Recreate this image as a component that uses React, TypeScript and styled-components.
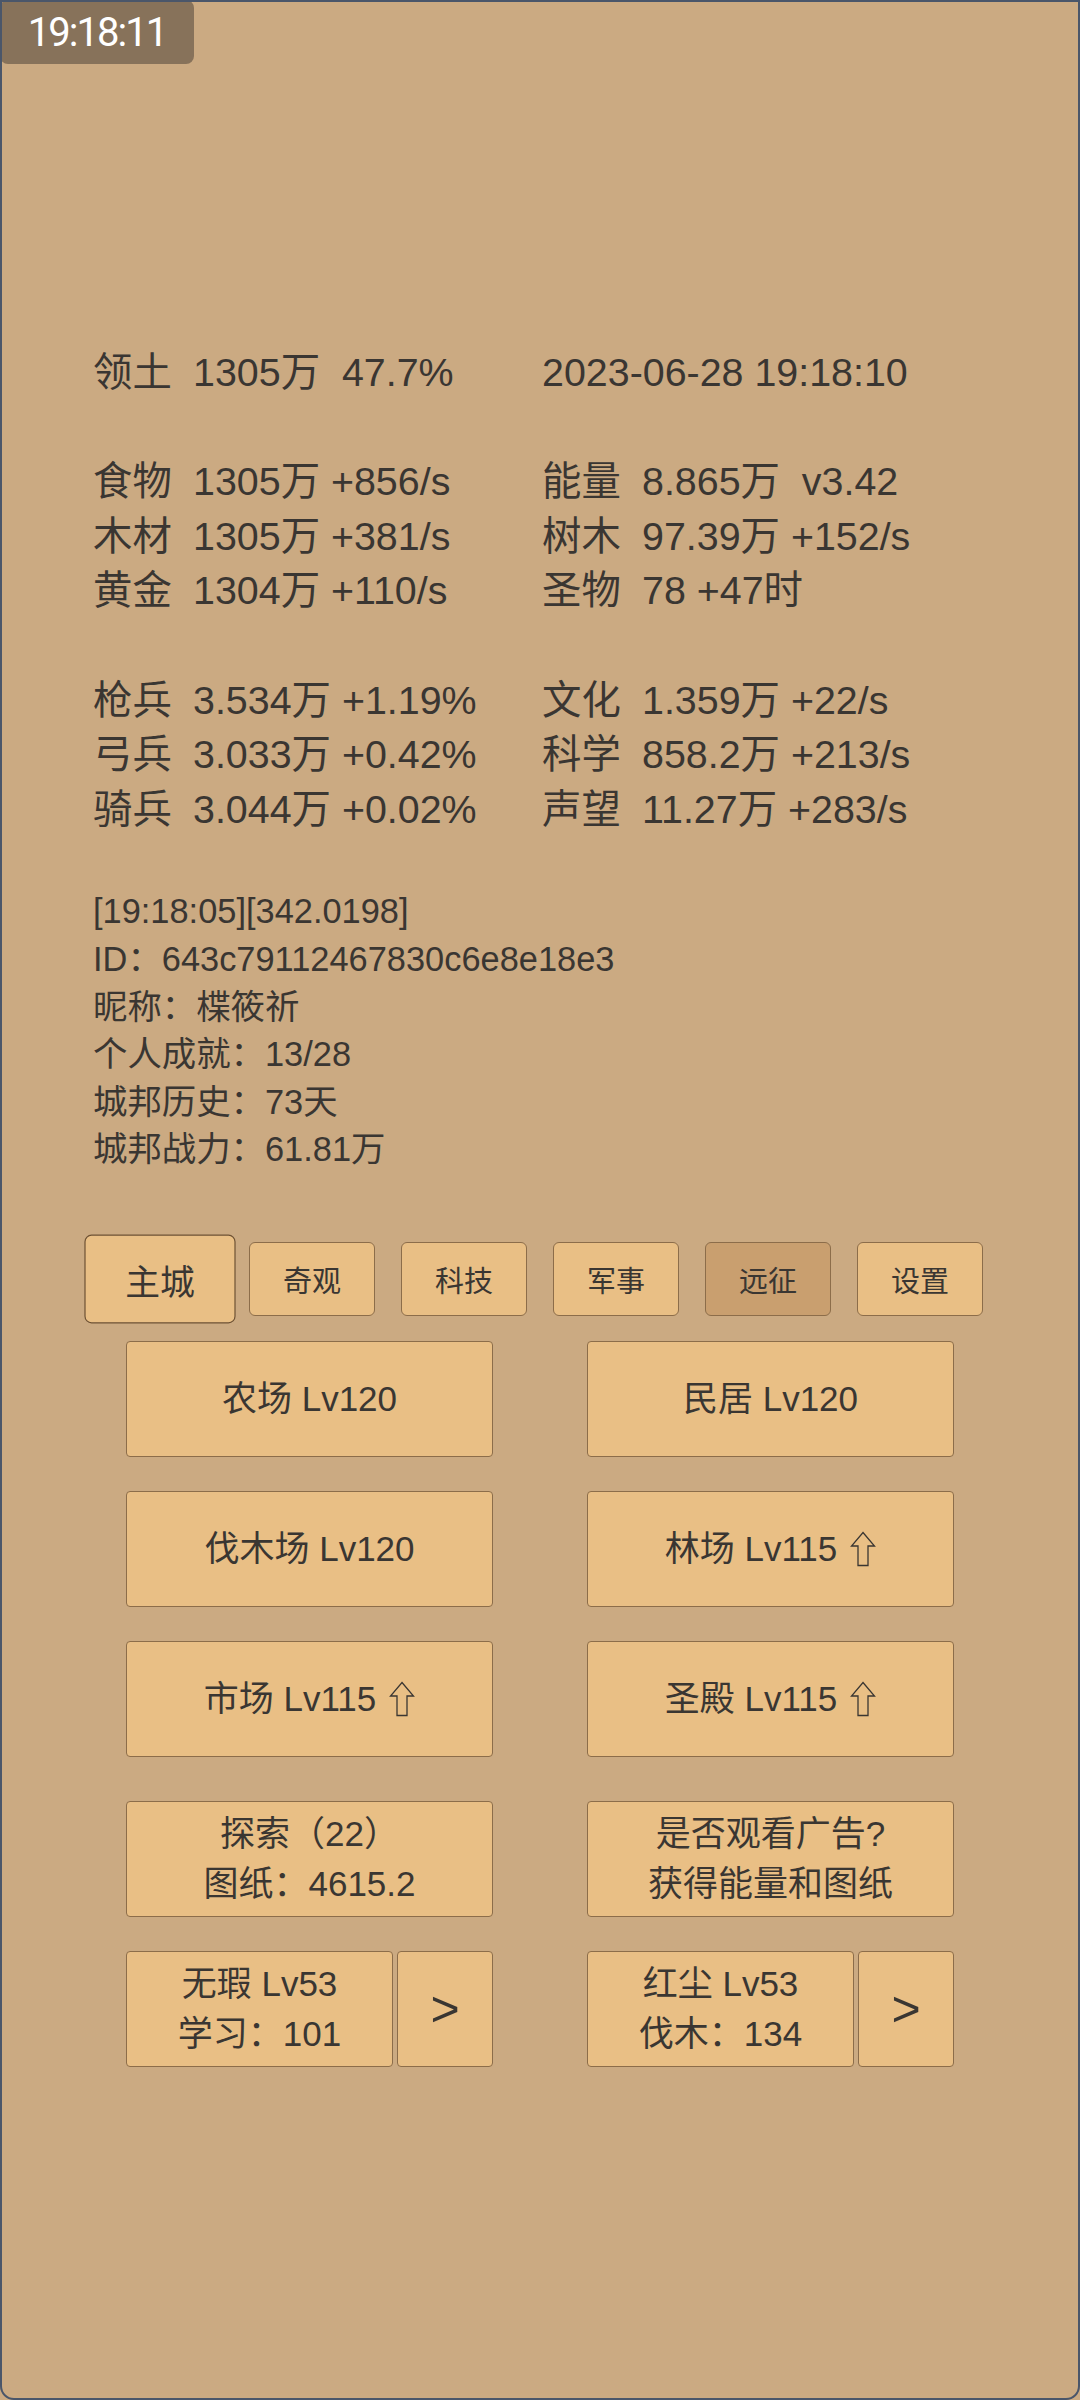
import React from "react";
import styled, { createGlobalStyle } from "styled-components";

const GlobalStyle = createGlobalStyle`
  body {
    margin: 0;
    background: #cbaa82;
    font-family: "Liberation Sans", "Noto Sans CJK SC", sans-serif;
  }
`;

interface Stat {
  label?: string;
  value: string;
}

// 资源统计，null 表示空行
const statRows: ([Stat, Stat] | null)[] = [
  [
    { label: "领土", value: "1305万  47.7%" },
    { value: "2023-06-28 19:18:10" },
  ],
  null,
  [
    { label: "食物", value: "1305万 +856/s" },
    { label: "能量", value: "8.865万  v3.42" },
  ],
  [
    { label: "木材", value: "1305万 +381/s" },
    { label: "树木", value: "97.39万 +152/s" },
  ],
  [
    { label: "黄金", value: "1304万 +110/s" },
    { label: "圣物", value: "78 +47时" },
  ],
  null,
  [
    { label: "枪兵", value: "3.534万 +1.19%" },
    { label: "文化", value: "1.359万 +22/s" },
  ],
  [
    { label: "弓兵", value: "3.033万 +0.42%" },
    { label: "科学", value: "858.2万 +213/s" },
  ],
  [
    { label: "骑兵", value: "3.044万 +0.02%" },
    { label: "声望", value: "11.27万 +283/s" },
  ],
];

const infoLines = [
  "[19:18:05][342.0198]",
  "ID：643c79112467830c6e8e18e3",
  "昵称：楪筱祈",
  "个人成就：13/28",
  "城邦历史：73天",
  "城邦战力：61.81万",
];

const tabs = ["主城", "奇观", "科技", "军事", "远征", "设置"];

const buildings = [
  { name: "农场 Lv120", up: false },
  { name: "民居 Lv120", up: false },
  { name: "伐木场 Lv120", up: false },
  { name: "林场 Lv115", up: true },
  { name: "市场 Lv115", up: true },
  { name: "圣殿 Lv115", up: true },
];

const heroes = [
  { name: "无瑕 Lv53", job: "学习：101" },
  { name: "红尘 Lv53", job: "伐木：134" },
];

// 可升级标记（空心上箭头）
const UpgradeIcon = () => (
  <UpIcon width="26" height="36" viewBox="0 0 26 36">
    <path
      d="M13 1.5 L24.5 15 L18 15 L18 34.5 L8 34.5 L8 15 L1.5 15 Z"
      fill="none"
      stroke="#3a3632"
      strokeWidth="1.3"
    />
  </UpIcon>
);

const App: React.FC = () => {
  return (
    <>
      <GlobalStyle />
      <Screen>
        <Clock>19:18:11</Clock>

        <StatBlock>
          {statRows.map((row, i) =>
            row ? (
              <StatRow key={i}>
                {row.map((s, j) => (
                  <StatCell key={j}>
                    {s.label && <StatLabel>{s.label}</StatLabel>}
                    <StatValue>{s.value}</StatValue>
                  </StatCell>
                ))}
              </StatRow>
            ) : (
              <BlankLine key={i} />
            )
          )}
        </StatBlock>

        <InfoBlock>
          {infoLines.map((line) => (
            <InfoLine key={line}>{line}</InfoLine>
          ))}
        </InfoBlock>

        <TabBar>
          {tabs.map((t) => (
            <Tab key={t} $active={t === "主城"} $dim={t === "远征"}>
              {t}
            </Tab>
          ))}
        </TabBar>

        <ButtonGrid>
          {buildings.map((b) => (
            <BigButton key={b.name}>
              {b.name}
              {b.up && <UpgradeIcon />}
            </BigButton>
          ))}
        </ButtonGrid>

        <ActionGrid>
          <BigButton $multi>
            <span>探索（22）</span>
            <span>图纸：4615.2</span>
          </BigButton>
          <BigButton $multi>
            <span>是否观看广告?</span>
            <span>获得能量和图纸</span>
          </BigButton>
          {heroes.map((h) => (
            <HeroCell key={h.name}>
              <HeroButton>
                <span>{h.name}</span>
                <span>{h.job}</span>
              </HeroButton>
              <ArrowButton>&gt;</ArrowButton>
            </HeroCell>
          ))}
        </ActionGrid>
      </Screen>
    </>
  );
};

export default App;

const Screen = styled.div`
  position: relative;
  box-sizing: border-box;
  width: 1080px;
  height: 2400px;
  border: 2px solid #4a566a;
  border-radius: 0 0 14px 14px;
  background: #cbaa82;
  color: #3a3632;
  overflow: hidden;
  padding-top: 343px;
`;

const Clock = styled.div`
  position: absolute;
  top: -2px;
  left: -2px;
  width: 194px;
  height: 64px;
  display: flex;
  align-items: center;
  justify-content: center;
  background: #87725a;
  border-radius: 8px;
  color: #ffffff;
  font-family: Roboto, sans-serif;
  font-size: 40px;
  letter-spacing: -2px;
`;

const StatBlock = styled.div`
  padding-left: 91px;
  font-size: 39.4px;
  line-height: 54.6px;
`;

const StatRow = styled.div`
  display: grid;
  grid-template-columns: 449px 1fr;
`;

const BlankLine = styled.div`
  height: 54.6px;
`;

const StatCell = styled.div`
  display: flex;
`;

const StatLabel = styled.span`
  width: 100px;
  flex-shrink: 0;
`;

const StatValue = styled.span`
  white-space: pre;
`;

const InfoBlock = styled.div`
  margin-top: 52px;
  padding-left: 91px;
  font-size: 34.4px;
  line-height: 47.6px;
`;

const InfoLine = styled.div``;

const TabBar = styled.div`
  display: flex;
  justify-content: center;
  gap: 26px;
  margin-top: 68px;
`;

const Tab = styled.div<{ $active?: boolean; $dim?: boolean }>`
  box-sizing: border-box;
  width: 126px;
  height: 74px;
  display: flex;
  align-items: center;
  justify-content: center;
  font-size: 29px;
  background: ${(p) => (p.$dim ? "#c99f6f" : "#e9bf85")};
  border: 1.5px solid ${(p) => (p.$active ? "#6e5234" : "#8c6d4a")};
  border-radius: 6px;
  transform: ${(p) => (p.$active ? "scale(1.2)" : "none")};
`;

const ButtonGrid = styled.div`
  display: grid;
  grid-template-columns: 367px 367px;
  column-gap: 94px;
  row-gap: 34px;
  justify-content: center;
  margin-top: 25px;
`;

const ActionGrid = styled(ButtonGrid)`
  margin-top: 44px;
`;

const BigButton = styled.div<{ $multi?: boolean }>`
  box-sizing: border-box;
  height: 116px;
  display: flex;
  flex-direction: ${(p) => (p.$multi ? "column" : "row")};
  align-items: center;
  justify-content: center;
  font-size: 35px;
  line-height: 50px;
  background: #e9bf85;
  border: 1.5px solid #8c6d4a;
  border-radius: 4px;
`;

const UpIcon = styled.svg`
  margin-left: 13px;
  flex-shrink: 0;
`;

const HeroCell = styled.div`
  display: flex;
  gap: 4px;
`;

const HeroButton = styled(BigButton)`
  width: 267px;
  flex-direction: column;
`;

const ArrowButton = styled(BigButton)`
  flex: 1;
  font-size: 50px;
`;
